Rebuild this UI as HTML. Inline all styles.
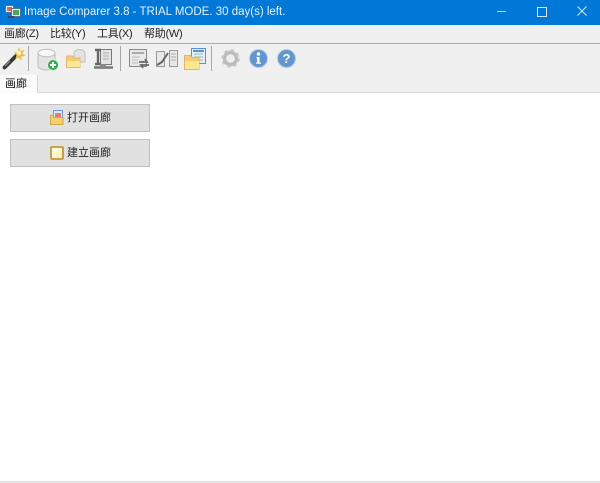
<!DOCTYPE html>
<html><head><meta charset="utf-8"><style>
html,body{margin:0;padding:0;background:#fff}
#w{position:relative;width:600px;height:483px;overflow:hidden;background:#fff;font-family:"Liberation Sans","Noto Sans CJK SC",sans-serif;filter:blur(.3px)}
.a{position:absolute}
.m{position:absolute;top:27px;font-size:11px;line-height:14px;color:#222;white-space:nowrap;letter-spacing:-.25px}
.b{position:absolute;left:10px;width:138px;height:26px;background:#e1e1e1;border:1px solid #c0c0c0}
.t{position:absolute;left:67px;font-size:11px;line-height:14px;color:#222;white-space:nowrap}
.s{position:absolute;top:46px;width:1px;height:25px;background:#a8a8a8}
svg{position:absolute;overflow:visible}
</style></head><body><div id="w">
<div class="a" style="left:0;top:0;width:600px;height:25px;background:#0078d7"></div>
<svg style="left:5px;top:4px" width="16" height="16" viewBox="0 0 16 16"><rect x="0.5" y="1.5" width="8" height="7" fill="#e9eef5" stroke="#5a7094"/><rect x="2" y="3" width="5" height="4" fill="#d96a5f"/><rect x="6.5" y="4.5" width="9" height="8" fill="#e9eef5" stroke="#5a7094"/><rect x="8" y="6" width="6" height="5" fill="#4fa45d"/><rect x="3" y="12" width="6" height="2" fill="#445"/></svg>
<div class="a" style="left:24px;top:5px;font-size:11.5px;line-height:15px;color:#e4f1fb;white-space:nowrap">Image Comparer 3.8 - TRIAL MODE. 30 day(s) left.</div>
<div class="a" style="left:497px;top:11px;width:9px;height:1px;background:#b8dcf5"></div>
<div class="a" style="left:537px;top:7px;width:8px;height:8px;border:1px solid #d0e8f8"></div>
<svg style="left:577px;top:6px" width="10" height="10" viewBox="0 0 10 10"><path d="M.5 .5L9.500 9.500M9.500 .5L.5 9.500" stroke="#d6eaf8" stroke-width="1" fill="none"/></svg>

<div class="a" style="left:0;top:25px;width:600px;height:18px;background:#f0f0f0"></div>
<div class="m" style="left:4px">画廊(Z)</div>
<div class="m" style="left:50px">比较(Y)</div>
<div class="m" style="left:97px">工具(X)</div>
<div class="m" style="left:144px">帮助(W)</div>
<div class="a" style="left:0;top:43px;width:600px;height:1px;background:#adadad"></div>
<div class="a" style="left:0;top:44px;width:600px;height:48px;background:#f0f0f0"></div>

<svg style="left:2px;top:47px" width="24" height="24" viewBox="0 0 24 24"><path d="M2.500 20.500L14 9" stroke="#3a3a3a" stroke-width="3.800" stroke-linecap="round"/><path d="M3 19L8 14" stroke="#999" stroke-width="1"/><path d="M17 0l1.500 4 4-1-2 3.500 3 2.500-4 .5 0 4-3-3-3 1.500 1-4-3-2.500 4-.5z" fill="#f0bf4a"/><circle cx="17" cy="6" r="2.200" fill="#fff6c0"/></svg>
<div class="s" style="left:28px"></div>
<svg style="left:37px;top:48px" width="24" height="24" viewBox="0 0 24 24"><path d="M1 5v13c0 2.500 4 4 8.500 4s8.500-1.500 8.500-4V5z" fill="#e3e3e3" stroke="#bdbdbd"/><ellipse cx="9.500" cy="5" rx="8.500" ry="3.800" fill="#f8f8f8" stroke="#bdbdbd"/><circle cx="16" cy="17" r="5.500" fill="#3aa852" stroke="#dff0df"/><path d="M13 17h6M16 14v6" stroke="#fff" stroke-width="2"/></svg>
<svg style="left:66px;top:49px" width="20" height="20" viewBox="0 0 20 20"><path d="M8 4c0-2 2.500-3.500 5.500-3.500S19 2 19 4v9H8z" fill="#e2e2e2" stroke="#c0c0c0"/><path d="M.5 7h6l1.500 2h6v9.500H.5z" fill="#f3cd70" stroke="#e2b870"/><path d="M1 12h13v6H1z" fill="#fbe794"/></svg>
<svg style="left:94px;top:48px" width="20" height="22" viewBox="0 0 20 22"><rect x="6.500" y="1.500" width="11" height="15" fill="#e4e4e4" stroke="#777"/><path d="M9 5h6M9 8h6M9 11h6" stroke="#aaa"/><path d="M1 2h6M4 2v14M1 16h6" stroke="#666" stroke-width="2.400" fill="none"/><path d="M0 19.500h19" stroke="#777" stroke-width="2.500"/><rect x="6" y="16" width="6" height="5" fill="#888"/></svg>
<div class="s" style="left:120px"></div>
<svg style="left:129px;top:48px" width="22" height="22" viewBox="0 0 22 22"><rect x="0.500" y="1.500" width="17" height="17" fill="#e8e8e8" stroke="#8a8a8a"/><rect x="3" y="4" width="12" height="2" fill="#aaa"/><path d="M3 9h8M3 12h6M3 15h6" stroke="#bbb"/><path d="M10 14h8l-2-3M20 17h-8l2 3" stroke="#666" stroke-width="1.800" fill="none"/></svg>
<svg style="left:156px;top:49px" width="22" height="20" viewBox="0 0 22 20"><rect x="0.500" y="2.500" width="8" height="15" fill="#e8e8e8" stroke="#999"/><rect x="13.500" y="1.500" width="8" height="16" fill="#e8e8e8" stroke="#999"/><path d="M1 16l5-3 6-9" stroke="#666" stroke-width="2" fill="none"/><path d="M15 5h5M15 8h5M15 11h5" stroke="#aaa"/></svg>
<svg style="left:184px;top:48px" width="23" height="23" viewBox="0 0 23 23"><rect x="7.500" y="0.500" width="14" height="15" fill="#e6eefa" stroke="#5a90d8"/><path d="M9 3h11" stroke="#5a90d8" stroke-width="2"/><path d="M10 6h9M10 9h9M10 12h9" stroke="#8fbcae"/><path d="M.5 7.500h6l1.500 2h7v12H.5z" fill="#f3cd70" stroke="#e6b070"/><path d="M1 13h14v8H1z" fill="#fde88f"/></svg>
<div class="s" style="left:211px"></div>
<svg style="left:221px;top:49px" width="19" height="19" viewBox="0 0 19 19"><circle cx="9.500" cy="9.500" r="6" fill="none" stroke="#bcbcbc" stroke-width="3.400"/><circle cx="9.500" cy="9.500" r="8" fill="none" stroke="#c2c2c2" stroke-width="2.400" stroke-dasharray="3 3.280"/><circle cx="9.500" cy="9.500" r="2.500" fill="#eee"/></svg>
<svg style="left:249px;top:49px" width="19" height="19" viewBox="0 0 19 19"><circle cx="9.500" cy="9.500" r="9" fill="#6396cf" stroke="#b4cfeb"/><circle cx="9.500" cy="5" r="1.700" fill="#fff"/><path d="M7.500 8h3v5.500h1.500v1.200H7v-1.200h1.200V9.200H7.500z" fill="#fff"/></svg>
<svg style="left:277px;top:49px" width="19" height="19" viewBox="0 0 19 19"><circle cx="9.500" cy="9.500" r="9" fill="#6396cf" stroke="#b4cfeb"/><text x="9.500" y="14" text-anchor="middle" font-size="13" font-weight="bold" font-family="Liberation Sans,sans-serif" fill="#fff">?</text></svg>

<div class="a" style="left:0;top:92px;width:600px;height:1px;background:#d9d9d9"></div>
<div class="a" style="left:0;top:75px;width:38px;height:18px;background:#fbfbfb;border-right:1px solid #d9d9d9;box-sizing:border-box"></div>
<div class="a" style="left:5px;top:77px;font-size:11px;line-height:14px;color:#111">画廊</div>

<div class="b" style="top:104px"></div>
<svg style="left:50px;top:110px" width="14" height="15" viewBox="0 0 14 15"><rect x="3.500" y=".5" width="9" height="9" fill="#dbe8f8" stroke="#6a9ad8"/><rect x="5" y="3" width="6" height="4" fill="#e8806a"/><path d="M.5 5.500h3v2h9.500v7H.5z" fill="#f3cf70" stroke="#d0a848"/></svg>
<div class="t" style="top:111px">打开画廊</div>
<div class="b" style="top:139px"></div>
<svg style="left:50px;top:146px" width="14" height="14" viewBox="0 0 14 14"><defs><linearGradient id="g" x1="0" y1="0" x2="1" y2="1"><stop offset="0" stop-color="#fffdf0"/><stop offset="1" stop-color="#f8e8a8"/></linearGradient></defs><rect x="1" y="1" width="12" height="12" rx="1" fill="url(#g)" stroke="#bf9a3c" stroke-width="1.800"/></svg>
<div class="t" style="top:146px">建立画廊</div>

<div class="a" style="left:0;top:481px;width:600px;height:2px;background:#e4e4e4"></div>
</div></body></html>
